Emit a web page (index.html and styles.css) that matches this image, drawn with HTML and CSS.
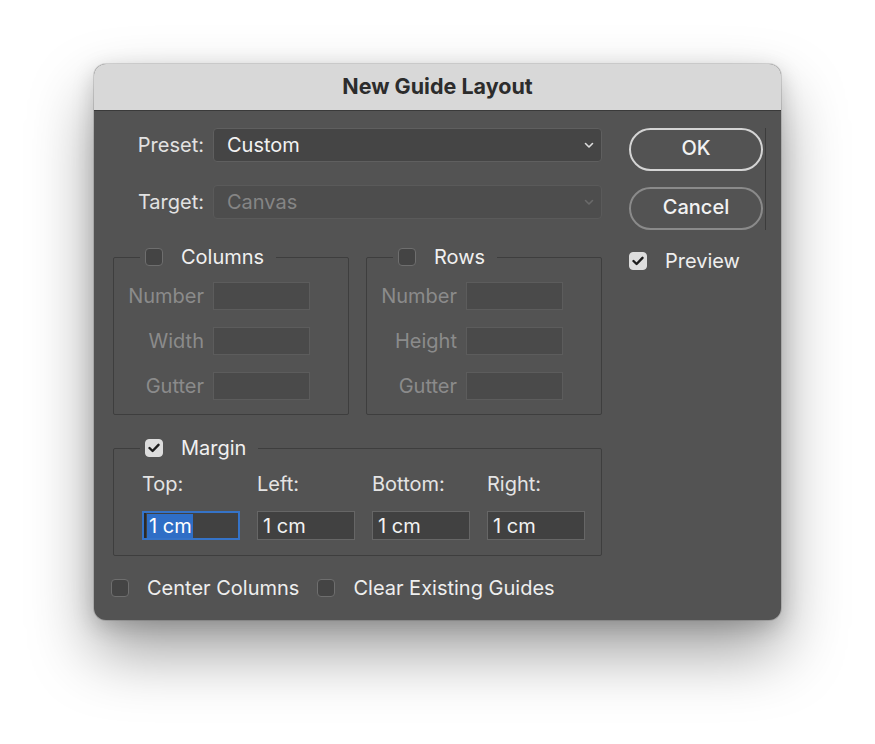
FILE: index.html
```html
<!DOCTYPE html>
<html lang="en">
<head>
<meta charset="utf-8">
<title>New Guide Layout</title>
<link rel="stylesheet" href="styles.css">
</head>
<body>
<div class="dialog">
  <div class="titlebar">New Guide Layout</div>
  <div class="content">
    <div class="main">
      <div class="field-row">
        <span class="row-label">Preset:</span>
        <div class="select">
          <span>Custom</span>
          <svg class="chev" width="10" height="7" viewBox="0 0 10 7"><polyline points="1.5,1.5 5,5 8.5,1.5" fill="none" stroke="currentColor" stroke-width="1.6" stroke-linecap="round" stroke-linejoin="round"/></svg>
        </div>
      </div>
      <div class="field-row target">
        <span class="row-label">Target:</span>
        <div class="select disabled">
          <span>Canvas</span>
          <svg class="chev" width="10" height="7" viewBox="0 0 10 7"><polyline points="1.5,1.5 5,5 8.5,1.5" fill="none" stroke="currentColor" stroke-width="1.6" stroke-linecap="round" stroke-linejoin="round"/></svg>
        </div>
      </div>
      <div class="groups">
        <fieldset class="group">
          <legend><span class="cb"></span><span class="legend-text">Columns</span></legend>
          <div class="grid">
            <span class="lbl">Number</span><span class="input"></span>
            <span class="lbl">Width</span><span class="input"></span>
            <span class="lbl">Gutter</span><span class="input"></span>
          </div>
        </fieldset>
        <fieldset class="group">
          <legend><span class="cb"></span><span class="legend-text">Rows</span></legend>
          <div class="grid">
            <span class="lbl">Number</span><span class="input"></span>
            <span class="lbl">Height</span><span class="input"></span>
            <span class="lbl">Gutter</span><span class="input"></span>
          </div>
        </fieldset>
      </div>
      <fieldset class="group margin">
        <legend><span class="cb checked"><svg width="12" height="10" viewBox="0 0 12 10"><polyline points="1.5,5 4.6,8 10.5,1.8" fill="none" stroke="#1c1c1c" stroke-width="2.4" stroke-linecap="round" stroke-linejoin="round"/></svg></span><span class="legend-text">Margin</span></legend>
        <div class="mgrid">
          <span class="mlbl">Top:</span>
          <span class="mlbl">Left:</span>
          <span class="mlbl">Bottom:</span>
          <span class="mlbl">Right:</span>
          <span class="minput focus"><span class="sel">1 cm</span></span>
          <span class="minput">1 cm</span>
          <span class="minput">1 cm</span>
          <span class="minput">1 cm</span>
        </div>
      </fieldset>
    </div>
    <div class="side">
      <div class="buttons">
        <div class="btn ok">OK</div>
        <div class="btn cancel">Cancel</div>
      </div>
      <div class="check-row preview">
        <span class="cb checked"><svg width="12" height="10" viewBox="0 0 12 10"><polyline points="1.5,5 4.6,8 10.5,1.8" fill="none" stroke="#1c1c1c" stroke-width="2.4" stroke-linecap="round" stroke-linejoin="round"/></svg></span>
        <span>Preview</span>
      </div>
    </div>
  </div>
  <div class="footer">
    <div class="check-row">
      <span class="cb"></span><span>Center Columns</span>
    </div>
    <div class="check-row">
      <span class="cb"></span><span>Clear Existing Guides</span>
    </div>
  </div>
</div>
</body>
</html>
```

FILE: styles.css
```css
* { box-sizing: border-box; }

html, body {
  margin: 0;
  padding: 0;
  background: #ffffff;
}

body {
  font-family: "Inter", "Liberation Sans", sans-serif;
  font-size: 20px;
  color: #ececec;
  padding: 64px 0 0 94px;
  height: 744px;
  overflow: hidden;
}

.dialog {
  width: 687px;
  height: 556px;
  background: #535353;
  border-radius: 12px;
  overflow: hidden;
  box-shadow: 0 0 0 1px rgba(0,0,0,0.12), 0 32px 64px rgba(0,0,0,0.38), 0 6px 22px rgba(0,0,0,0.18);
}

.titlebar {
  height: 47px;
  line-height: 45px;
  background: #d8d8d8;
  border-bottom: 1px solid #3a3a3a;
  text-align: center;
  font-weight: 700;
  font-size: 21.5px;
  color: #2c2c2c;
}

.content {
  display: flex;
  gap: 27px;
  padding: 17px 0 0 19px;
}

.main {
  width: 489px;
  display: flex;
  flex-direction: column;
}

.field-row {
  display: flex;
  align-items: center;
  gap: 9px;
  height: 34px;
}

.field-row.target {
  margin-top: 23px;
  height: 34px;
}

.row-label {
  width: 91px;
  text-align: right;
  color: #e2e2e2;
}

.select {
  flex: 1;
  height: 34px;
  background: #454545;
  border: 1px solid #5f5f5f;
  border-radius: 4px;
  display: flex;
  align-items: center;
  justify-content: space-between;
  padding: 0 7px 0 13px;
  color: #f2f2f2;
}

.select .chev { color: #dcdcdc; }

.select.disabled {
  background: #4d4d4d;
  border-color: #5a5a5a;
  color: #858585;
}

.select.disabled .chev { color: #6a6a6a; }

.groups {
  display: flex;
  gap: 17px;
  margin-top: 28px;
}

fieldset.group {
  margin: 0;
  padding: 15px 0 14px 0;
  border: 1px solid #3e3e3e;
  border-radius: 2px;
  flex: 1;
  min-width: 0;
}

fieldset.group legend {
  margin-left: 26px;
  padding: 0 12px 0 5px;
  height: 20px;
  display: flex;
  align-items: center;
  gap: 18px;
}

.legend-text { color: #f0f0f0; line-height: 20px; }

.cb {
  width: 18px;
  height: 18px;
  border-radius: 4px;
  background: #444444;
  border: 1px solid #6e6e6e;
  display: inline-flex;
  align-items: center;
  justify-content: center;
  flex: none;
}

.cb.checked {
  background: #dddddd;
  border-color: #dddddd;
}

.grid {
  display: grid;
  grid-template-columns: 90px 97px;
  column-gap: 9px;
  row-gap: 17px;
  align-items: center;
}

.lbl {
  text-align: right;
  color: #8b8b8b;
}

.input {
  height: 28px;
  background: #4a4a4a;
  border: 1px solid #5c5c5c;
}

fieldset.margin {
  margin-top: 23px;
  padding: 16px 0 15px 28px;
  flex: none;
}

fieldset.margin legend {
  margin-left: -2px;
}

.mgrid {
  display: grid;
  grid-template-columns: repeat(4, 98px);
  column-gap: 17px;
  row-gap: 17px;
}

.mlbl {
  line-height: 20px;
  color: #e4e4e4;
}

.minput {
  height: 29px;
  background: #414141;
  border: 1px solid #666666;
  padding: 0 5px;
  display: flex;
  align-items: center;
  color: #f2f2f2;
}

.minput.focus {
  border: 2px solid #3573c8;
  padding: 0 3px;
  box-shadow: inset 2px 0 0 #2a2a2a;
}

.minput .sel {
  background: #2f6ec6;
  color: #ffffff;
  line-height: 24px;
  padding: 0 1px 0 2px;
}

.side {
  display: flex;
  flex-direction: column;
  width: 137px;
}

.buttons {
  display: flex;
  flex-direction: column;
  gap: 16px;
  border-right: 1px solid #3c3c3c;
  padding-right: 2px;
}

.btn {
  width: 134px;
  height: 43px;
  border-radius: 22px;
  border: 2px solid #d4d4d4;
  display: flex;
  align-items: center;
  justify-content: center;
  padding-bottom: 3px;
  font-size: 20px;
  color: #f2f2f2;
  font-weight: 500;
}

.btn.cancel {
  border-color: #8a8a8a;
}

.check-row {
  display: flex;
  align-items: center;
  gap: 18px;
  color: #eeeeee;
}

.preview {
  margin-top: 19px;
}

.footer {
  display: flex;
  gap: 18px;
  padding: 20px 0 0 17px;
}
```
